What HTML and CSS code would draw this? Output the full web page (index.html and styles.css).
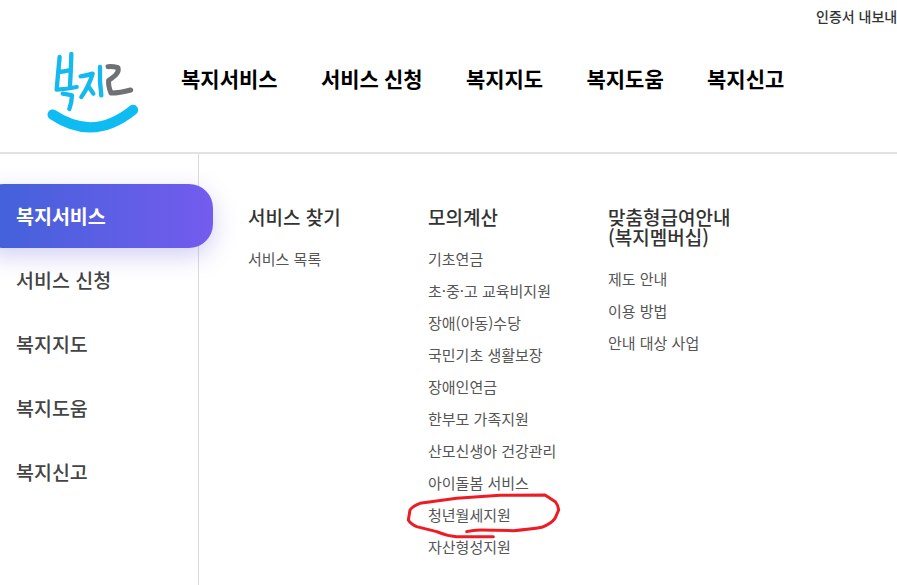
FILE: index.html
```html
<!DOCTYPE html>
<html lang="ko">
<head>
<meta charset="utf-8">
<title>복지로</title>
<link rel="stylesheet" href="styles.css">
</head>
<body>
<header class="header">
  <div class="util"><a class="util-link">인증서 내보내기</a></div>
  <div class="bar">
    <a class="logo" aria-label="복지로">
      <svg width="105" height="92" viewBox="0 0 315 276" fill="none" stroke-linecap="round" stroke-linejoin="round">
        <g stroke="#14b9ee" stroke-width="13">
          <path d="M59 36 Q54 85 50 134 Q80 132 110 126 M94 27 Q93 75 90 122 M55 81 Q72 80 90 75"/>
          <path d="M68 146 Q82 148 96 151 Q95 172 88 192"/>
          <path d="M122 94 Q140 92 158 86 Q146 125 124 156 M144 122 Q152 134 160 146 M180 66 Q178 110 184 151"/>
        </g>
        <path d="M204 65 Q219 64 234 68 Q237 80 227 90 Q216 100 206 106 Q204 122 213 144 Q240 144 272 135" stroke="#6f7175" stroke-width="15"/>
        <path d="M38 209 Q95 247 150 247 Q215 247 279 195" stroke="#0fbcf2" stroke-width="31"/>
      </svg>
    </a>
    <nav class="gnb">
      <a class="gnb-item">복지서비스</a>
      <a class="gnb-item">서비스 신청</a>
      <a class="gnb-item">복지지도</a>
      <a class="gnb-item">복지도움</a>
      <a class="gnb-item">복지신고</a>
    </nav>
  </div>
</header>
<main class="main">
  <aside class="side">
    <a class="side-item side-item-active">복지서비스</a>
    <a class="side-item">서비스 신청</a>
    <a class="side-item">복지지도</a>
    <a class="side-item">복지도움</a>
    <a class="side-item">복지신고</a>
  </aside>
  <section class="panel">
    <div class="col">
      <h2 class="col-title">서비스 찾기</h2>
      <ul class="links">
        <li>서비스 목록</li>
      </ul>
    </div>
    <div class="col">
      <h2 class="col-title">모의계산</h2>
      <ul class="links">
        <li>기초연금</li>
        <li>초·중·고 교육비지원</li>
        <li>장애(아동)수당</li>
        <li>국민기초 생활보장</li>
        <li>장애인연금</li>
        <li>한부모 가족지원</li>
        <li>산모신생아 건강관리</li>
        <li>아이돌봄 서비스</li>
        <li>청년월세지원</li>
        <li>자산형성지원</li>
      </ul>
    </div>
    <div class="col">
      <h2 class="col-title">맞춤형급여안내<br>(복지멤버십)</h2>
      <ul class="links">
        <li>제도 안내</li>
        <li>이용 방법</li>
        <li>안내 대상 사업</li>
      </ul>
    </div>
  </section>
</main>
<svg class="scribble" width="170" height="60" viewBox="0 0 510 180" fill="none" stroke="#ed1c24" stroke-width="9" stroke-linecap="round" stroke-linejoin="round">
  <path d="M200 125 Q220 120 240 120 L340 122 Q395 118 425 112 Q455 100 465 85 L476 60 Q474 45 466 35 L435 15 L300 16 L170 25 L60 40 Q38 48 30 60 L25 90 Q32 102 50 110 L110 125 Q140 138 170 140 L280 140"/>
</svg>
</body>
</html>
```
FILE: styles.css
```css
* { box-sizing: border-box; }
html, body { margin: 0; padding: 0; }
body {
  position: relative;
  width: 897px;
  height: 585px;
  overflow: hidden;
  background: #fff;
  font-family: "Noto Sans CJK KR", "Noto Sans", sans-serif;
  color: #333;
}
h2, ul { margin: 0; padding: 0; }
ul { list-style: none; }

.header {
  height: 154px;
  border-bottom: 2px solid #e2e2e2;
}
.util {
  height: 34px;
  padding: 3px 0 0 816px;
  white-space: nowrap;
}
.util-link {
  font-size: 14px;
  line-height: 20px;
  font-weight: 500;
  color: #333;
}
.bar {
  display: flex;
  align-items: flex-start;
  height: 118px;
}
.logo {
  display: block;
  margin: 11px 0 0 40px;
  width: 105px;
  flex: none;
}
.gnb {
  display: flex;
  margin: 28px 0 0 36px;
  gap: 43.300px;
}
.gnb-item {
  font-size: 21px;
  line-height: 32px;
  font-weight: 700;
  word-spacing: -0.800px;
  color: #000;
  white-space: nowrap;
}

.main {
  display: flex;
  height: 431px;
}
.side {
  width: 199px;
  flex: none;
  padding-top: 30px;
  border-right: 1px solid #dcdcdc;
}
.side-item {
  display: block;
  height: 64px;
  padding-left: 16px;
  font-size: 19.500px;
  line-height: 64px;
  font-weight: 500;
  color: #444;
  white-space: nowrap;
}
.side-item-active {
  position: relative;
  width: 233px;
  margin-left: -20px;
  padding-left: 36px;
  border-radius: 24px;
  background: linear-gradient(90deg, #3f62d8, #745bee);
  box-shadow: 0 8px 24px rgba(92, 84, 214, 0.28);
  color: #fff;
  font-weight: 700;
}
.panel {
  display: flex;
  padding: 53px 0 0 49px;
}
.col { width: 180px; }
.col-title {
  font-size: 19px;
  line-height: 20px;
  font-weight: 500;
  color: #333;
  margin-bottom: 20px;
}
.links li {
  height: 32px;
  font-size: 15px;
  line-height: 24px;
  color: #555;
  white-space: nowrap;
}
.scribble {
  position: absolute;
  left: 400px;
  top: 490px;
}
```
